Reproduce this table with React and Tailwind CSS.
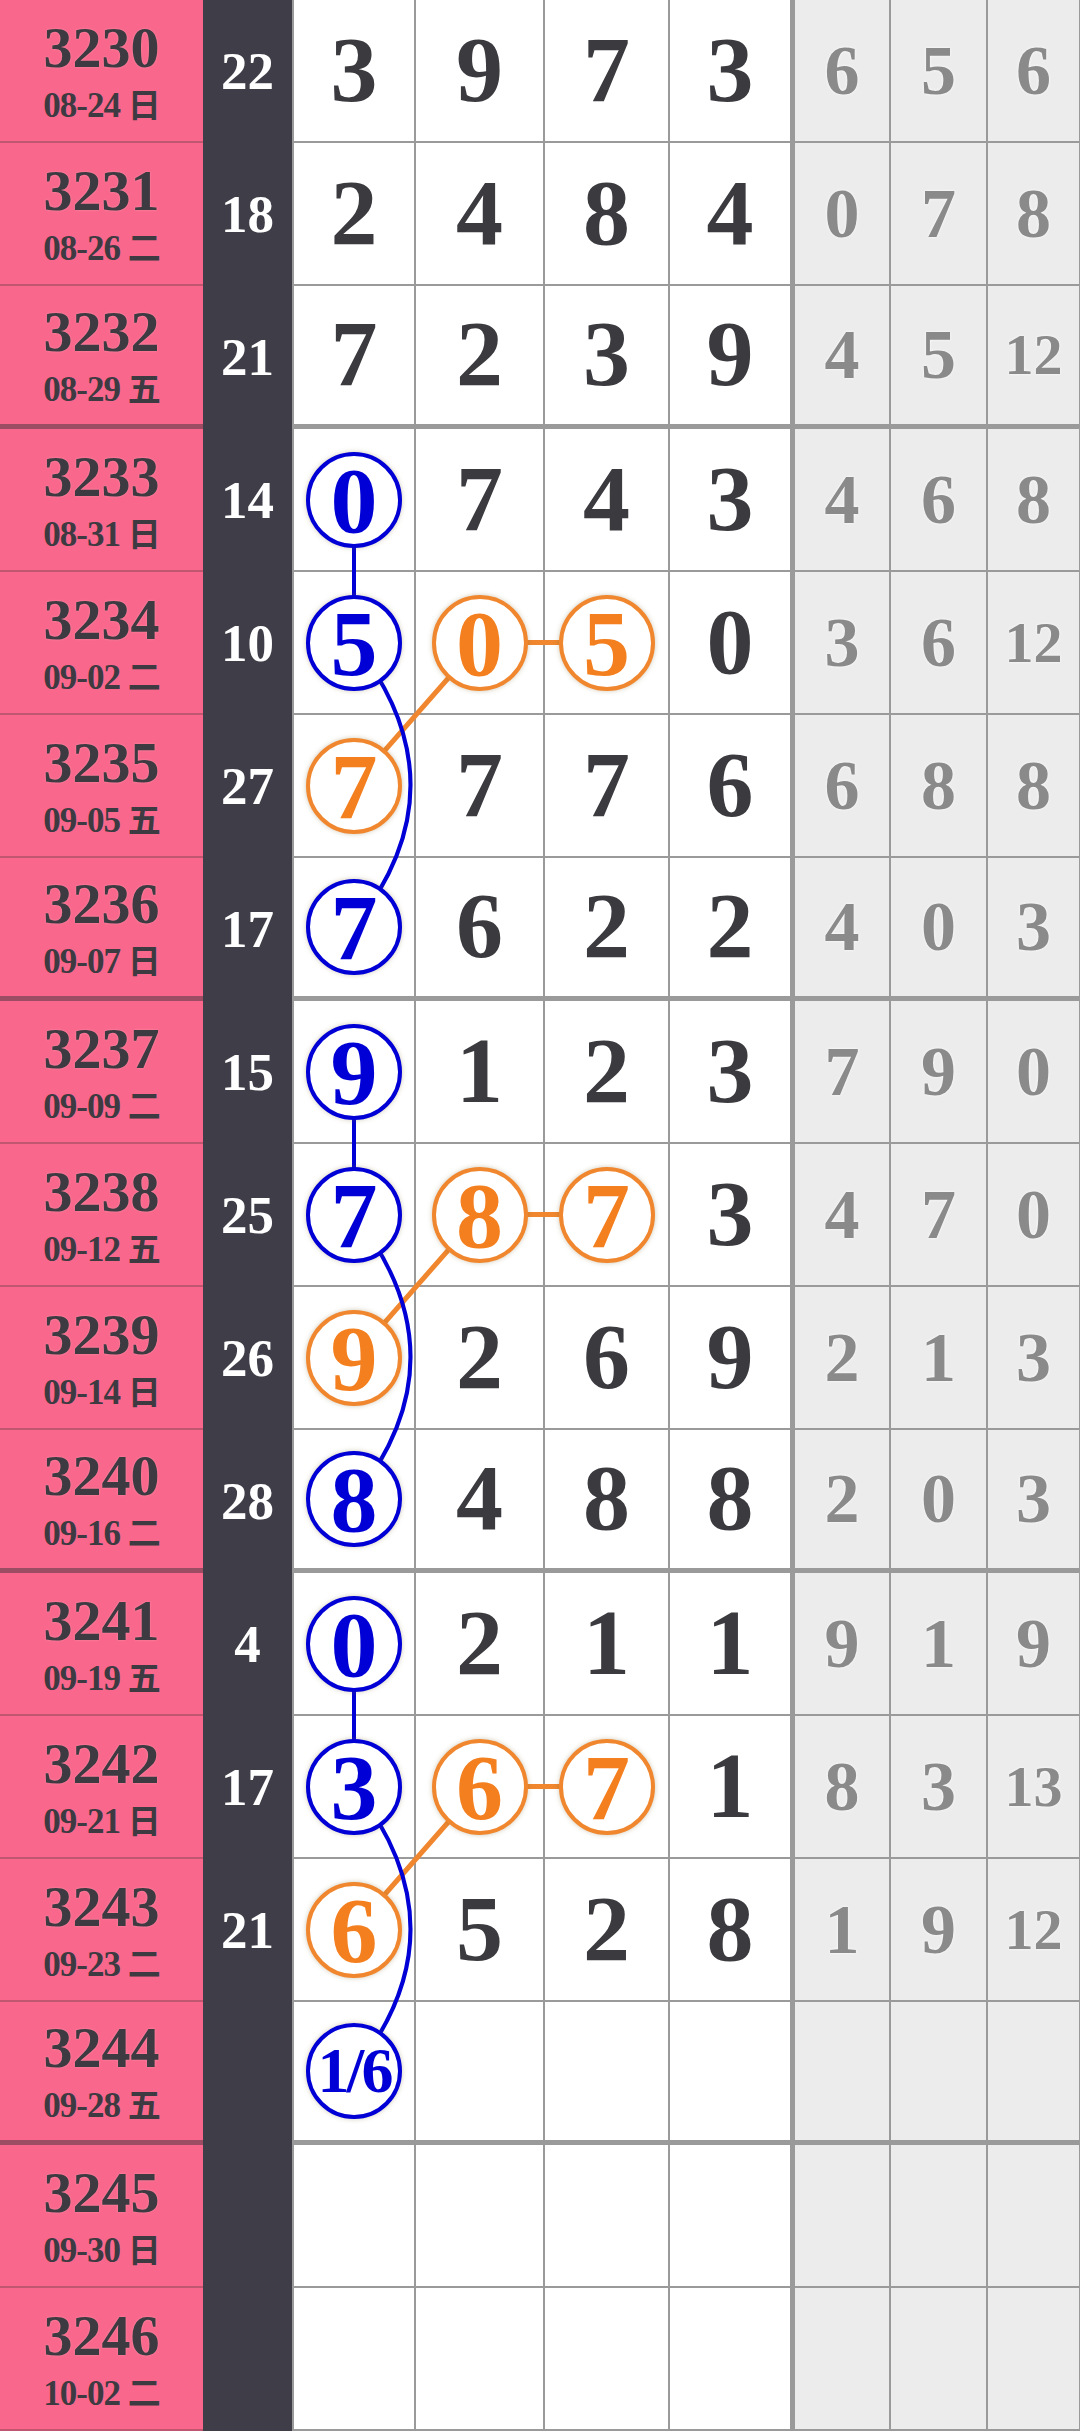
import React from "react";

const rows = [
  { n: "3230", d: "08-24", w: "日", s: "22", m: ["3", "9", "7", "3"], g: ["6", "5", "6"] },
  { n: "3231", d: "08-26", w: "二", s: "18", m: ["2", "4", "8", "4"], g: ["0", "7", "8"] },
  { n: "3232", d: "08-29", w: "五", s: "21", m: ["7", "2", "3", "9"], g: ["4", "5", "12"] },
  { n: "3233", d: "08-31", w: "日", s: "14", m: ["0", "7", "4", "3"], g: ["4", "6", "8"] },
  { n: "3234", d: "09-02", w: "二", s: "10", m: ["5", "0", "5", "0"], g: ["3", "6", "12"] },
  { n: "3235", d: "09-05", w: "五", s: "27", m: ["7", "7", "7", "6"], g: ["6", "8", "8"] },
  { n: "3236", d: "09-07", w: "日", s: "17", m: ["7", "6", "2", "2"], g: ["4", "0", "3"] },
  { n: "3237", d: "09-09", w: "二", s: "15", m: ["9", "1", "2", "3"], g: ["7", "9", "0"] },
  { n: "3238", d: "09-12", w: "五", s: "25", m: ["7", "8", "7", "3"], g: ["4", "7", "0"] },
  { n: "3239", d: "09-14", w: "日", s: "26", m: ["9", "2", "6", "9"], g: ["2", "1", "3"] },
  { n: "3240", d: "09-16", w: "二", s: "28", m: ["8", "4", "8", "8"], g: ["2", "0", "3"] },
  { n: "3241", d: "09-19", w: "五", s: "4", m: ["0", "2", "1", "1"], g: ["9", "1", "9"] },
  { n: "3242", d: "09-21", w: "日", s: "17", m: ["3", "6", "7", "1"], g: ["8", "3", "13"] },
  { n: "3243", d: "09-23", w: "二", s: "21", m: ["6", "5", "2", "8"], g: ["1", "9", "12"] },
  { n: "3244", d: "09-28", w: "五", s: "", m: ["1/6", "", "", ""], g: ["", "", ""] },
  { n: "3245", d: "09-30", w: "日", s: "", m: ["", "", "", ""], g: ["", "", ""] },
  { n: "3246", d: "10-02", w: "二", s: "", m: ["", "", "", ""], g: ["", "", ""] },
];

const circles = {
  "3-0": "b", "4-0": "b", "6-0": "b", "7-0": "b", "8-0": "b", "10-0": "b",
  "11-0": "b", "12-0": "b", "14-0": "b",
  "4-1": "o", "4-2": "o", "5-0": "o", "8-1": "o", "8-2": "o", "9-0": "o",
  "12-1": "o", "12-2": "o", "13-0": "o",
};

const thick = (i) => i === 2 || i === 6 || i === 10 || i === 14;

const FONT = "font-['Liberation_Serif','Noto_Sans_CJK_SC',serif]";

function Circle({ color, text }) {
  const small = text.length > 1;
  const base =
    "relative z-10 flex items-center justify-center w-[96px] h-[96px] rounded-full border-4 bg-white shadow-[0_0_5px_rgba(120,100,40,0.35)] leading-none font-bold";
  const col =
    color === "b"
      ? "border-[#0000d6] text-[#0000d6]"
      : "border-[#f0872f] text-[#f47f1f]";
  return (
    <div className={`${base} ${col}`}>
      <span className={small ? "text-[64px] tracking-[-3px]" : "text-[94px]"}>{text}</span>
    </div>
  );
}

function MainCell({ ri, ci, v, widthCls }) {
  const key = `${ri}-${ci}`;
  const c = circles[key];
  const b = thick(ri) ? "border-b-[5px]" : "border-b-2";
  return (
    <div
      className={`${widthCls} ${b} h-full flex items-center justify-center bg-white border-[#9a9a9a]`}
    >
      {c ? (
        <Circle color={c} text={v} />
      ) : (
        <span className="text-[94px] leading-none font-bold text-[#3a3a3f] [text-shadow:0_0_3px_#fff] -mt-[4px]">
          {v}
        </span>
      )}
    </div>
  );
}

function GrayCell({ v, ri, widthCls }) {
  const b = thick(ri) ? "border-b-[5px]" : "border-b-2";
  const size = v.length > 1 ? "text-[58px]" : "text-[70px]";
  return (
    <div
      className={`${widthCls} ${b} h-full flex items-center justify-center bg-[#ececec] border-[#9a9a9a]`}
    >
      <span className={`${size} leading-none font-bold text-[#8a8a8a] [text-shadow:0_0_3px_#fff]`}>{v}</span>
    </div>
  );
}

function Row({ r, ri }) {
  const t = thick(ri);
  return (
    <div className="flex h-[143px] w-[1080px]">
      <div
        className={`w-[203px] h-full flex flex-col items-center justify-center gap-[10px] bg-[#f9688c] text-[#3d3a42] ${
          t ? "border-b-[5px] border-[#9c4d63]" : "border-b-2 border-[#c0566f]"
        }`}
      >
        <div className="text-[58px] leading-none font-bold [text-shadow:0_0_2px_rgba(255,160,180,0.8)]">{r.n}</div>
        <div className="text-[35px] leading-none font-bold tracking-[-1px] whitespace-nowrap">
          {r.d} <span className="font-['Noto_Sans_CJK_SC',sans-serif] text-[33px]">{r.w}</span>
        </div>
      </div>
      <div className="w-[89px] h-full flex items-center justify-center bg-[#3f3e48]">
        <span className="text-[53px] leading-none font-bold text-white">{r.s}</span>
      </div>
      <MainCell ri={ri} ci={0} v={r.m[0]} widthCls="w-[124px] border-l-2 border-r-2" />
      <MainCell ri={ri} ci={1} v={r.m[1]} widthCls="w-[129px] border-r-2" />
      <MainCell ri={ri} ci={2} v={r.m[2]} widthCls="w-[125px] border-r-2" />
      <MainCell ri={ri} ci={3} v={r.m[3]} widthCls="w-[125px] border-r-[5px]" />
      <GrayCell ri={ri} v={r.g[0]} widthCls="w-[96px] border-r-2" />
      <GrayCell ri={ri} v={r.g[1]} widthCls="w-[97px] border-r-2" />
      <GrayCell ri={ri} v={r.g[2]} widthCls="w-[92px] border-r-[1px]" />
    </div>
  );
}

function Lines() {
  const yc = (i) => i * 143 + (thick(i) ? 69 : 70.5);
  const x1 = 354;
  const x2 = 479.5;
  const x3 = 606.5;
  const groups = [3, 7, 11];
  return (
    <svg
      className="absolute left-0 top-0 z-[5] pointer-events-none"
      width="1080"
      height="2431"
      viewBox="0 0 1080 2431"
    >
      {groups.map((g) => (
        <g key={g}>
          <polyline
            points={`${x1},${yc(g + 2)} ${x2},${yc(g + 1)} ${x3},${yc(g + 1)}`}
            fill="none"
            stroke="#f0872f"
            strokeWidth="5"
          />
          <line x1={x1} y1={yc(g)} x2={x1} y2={yc(g + 1)} stroke="#0000d6" strokeWidth="4" />
          <path
            d={`M ${x1} ${yc(g + 1)} Q 467 ${yc(g + 2)} ${x1} ${yc(g + 3)}`}
            fill="none"
            stroke="#0000d6"
            strokeWidth="4"
          />
        </g>
      ))}
    </svg>
  );
}

export default function App() {
  return (
    <div className={`relative w-[1080px] h-[2432px] overflow-hidden bg-white ${FONT}`}>
      {rows.map((r, i) => (
        <Row key={r.n} r={r} ri={i} />
      ))}
      <Lines />
    </div>
  );
}
